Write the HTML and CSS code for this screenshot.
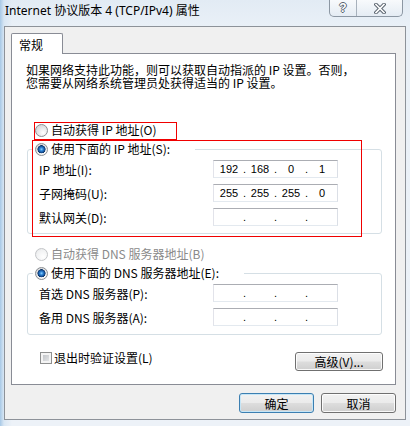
FILE: index.html
```html
<!DOCTYPE html>
<html lang="zh-CN">
<head>
<meta charset="utf-8">
<title>Internet 协议版本 4 (TCP/IPv4) 属性</title>
<link rel="stylesheet" href="styles.css">
</head>
<body>
<div class="window">
  <div class="titlebar">
    <div class="title">Internet 协议版本 4 (TCP/IPv4) 属性</div>
    <div class="caption-btns">
      <div class="cbtn help">?</div>
      <div class="cbtn close">
        <svg width="12" height="11" viewBox="0 0 12 11">
          <path d="M2 1.5 L10 9.5 M10 1.5 L2 9.5" stroke="#59636e" stroke-width="3.6" stroke-linecap="square"/>
          <path d="M2 1.5 L10 9.5 M10 1.5 L2 9.5" stroke="#ffffff" stroke-width="1.6" stroke-linecap="square"/>
        </svg>
      </div>
    </div>
  </div>
  <div class="client">
    <div class="tabs"><div class="tab">常规</div></div>
    <div class="panel">
      <p class="intro">如果网络支持此功能，则可以获取自动指派的 IP 设置。否则，<br>您需要从网络系统管理员处获得适当的 IP 设置。</p>
      <div class="radio-row first"><span class="radio"></span><span>自动获得 IP 地址(O)</span></div>
      <fieldset class="group g1">
        <legend><span class="radio checked"></span><span>使用下面的 IP 地址(S):</span></legend>
        <div class="field"><span>IP 地址(I):</span>
          <div class="ip"><span class="oct">192</span><span class="dot">.</span><span class="oct">168</span><span class="dot">.</span><span class="oct">0</span><span class="dot">.</span><span class="oct">1</span></div>
        </div>
        <div class="field"><span>子网掩码(U):</span>
          <div class="ip"><span class="oct">255</span><span class="dot">.</span><span class="oct">255</span><span class="dot">.</span><span class="oct">255</span><span class="dot">.</span><span class="oct">0</span></div>
        </div>
        <div class="field"><span>默认网关(D):</span>
          <div class="ip"><span class="oct"></span><span class="dot">.</span><span class="oct"></span><span class="dot">.</span><span class="oct"></span><span class="dot">.</span><span class="oct"></span></div>
        </div>
      </fieldset>
      <div class="radio-row dns disabled"><span class="radio"></span><span>自动获得 DNS 服务器地址(B)</span></div>
      <fieldset class="group g2">
        <legend><span class="radio checked"></span><span>使用下面的 DNS 服务器地址(E):</span></legend>
        <div class="field"><span>首选 DNS 服务器(P):</span>
          <div class="ip"><span class="oct"></span><span class="dot">.</span><span class="oct"></span><span class="dot">.</span><span class="oct"></span><span class="dot">.</span><span class="oct"></span></div>
        </div>
        <div class="field"><span>备用 DNS 服务器(A):</span>
          <div class="ip"><span class="oct"></span><span class="dot">.</span><span class="oct"></span><span class="dot">.</span><span class="oct"></span><span class="dot">.</span><span class="oct"></span></div>
        </div>
      </fieldset>
      <div class="footer-row">
        <label class="check"><span class="box"></span><span>退出时验证设置(L)</span></label>
        <button class="btn adv">高级(V)...</button>
      </div>
    </div>
    <div class="actions">
      <button class="btn default">确定</button>
      <button class="btn">取消</button>
    </div>
  </div>
  <div class="annot a1"></div>
  <div class="annot a2"></div>
</div>
</body>
</html>
```

FILE: styles.css
```css
* { box-sizing: border-box; }
html, body { margin: 0; padding: 0; }
body {
  width: 410px;
  height: 426px;
  overflow: hidden;
  font-family: "Noto Sans CJK SC", sans-serif;
  font-size: 12px;
  color: #000;
}
.window {
  position: relative;
  width: 410px;
  height: 426px;
  display: flex;
  flex-direction: column;
  background:
    linear-gradient(90deg, rgba(160,196,228,0.9) 0px, rgba(205,224,241,0.6) 4px, rgba(255,255,255,0) 12px),
    linear-gradient(180deg, #e2ebf4 0%, #e9f0f7 6%, #edf2f8 100%);
}
.titlebar {
  height: 26px;
  flex: none;
  display: flex;
  justify-content: space-between;
  align-items: flex-start;
  padding-left: 5px;
  padding-right: 7px;
}
.title {
  font-family: "Noto Sans", "Noto Sans CJK SC", sans-serif;
  font-size: 12px;
  line-height: 16px;
  padding-top: 3px;
  color: #000;
}
.caption-btns {
  display: flex;
  height: 17px;
  border: 1px solid #8c97a3;
  border-top: none;
  border-radius: 0 0 5px 5px;
  overflow: hidden;
  background: linear-gradient(180deg, rgba(255,255,255,0.75), rgba(228,235,243,0.75));
}
.cbtn {
  height: 16px;
  display: flex;
  align-items: center;
  justify-content: center;
}
.help {
  width: 27px;
  border-right: 1px solid #a7b1bc;
  font-family: "Liberation Sans", sans-serif;
  font-weight: bold;
  font-size: 12px;
  color: #ffffff;
  text-shadow: 1px 0 #5a646f, -1px 0 #5a646f, 0 1px #5a646f, 0 -1px #5a646f;
}
.close { width: 45px; }
.close svg { display: block; }

.client {
  flex: 1;
  margin: 0 4px 6px 4px;
  border: 1px solid #8d9299;
  background: #f0f0f0;
  padding: 6px 9px 0 6px;
  display: flex;
  flex-direction: column;
}
.tabs { display: flex; }
.tab {
  position: relative;
  z-index: 1;
  width: 52px;
  height: 21px;
  margin-bottom: -1px;
  padding: 2px 0 0 7px;
  line-height: 18px;
  background: #fff;
  border: 1px solid #898c95;
  border-bottom: none;
  border-radius: 2px 2px 0 0;
}
.panel {
  width: 385px;
  height: 332px;
  flex: none;
  background: #fff;
  border: 1px solid #898c95;
  display: flex;
  flex-direction: column;
  align-items: flex-start;
}
.intro {
  margin: 9px 0 0 14px;
  line-height: 13px;
  white-space: nowrap;
}
.radio-row {
  display: flex;
  align-items: center;
  gap: 3px;
  height: 16px;
  padding-left: 23px;
  line-height: 16px;
}
.radio-row.first { margin-top: 33px; }
.radio-row.dns { margin-top: 12px; }
.radio-row.disabled { color: #8a8a8a; }

.radio {
  display: inline-block;
  flex: none;
  width: 13px;
  height: 13px;
  border-radius: 50%;
  border: 1px solid #8b8e92;
  background: radial-gradient(circle at 65% 70%, #ffffff 0%, #e6e7e9 45%, #c9cbce 100%);
}
.radio.checked {
  background:
    radial-gradient(circle at 50% 48%, #8fd2ff 0px, #2f86d8 1.6px, #124484 3.4px, #0d3466 3.8px, rgba(13,52,102,0) 4.3px),
    radial-gradient(circle at 65% 70%, #ffffff 0%, #e6e7e9 55%, #c9cbce 100%);
}
.disabled .radio {
  border-color: #c3c5c8;
  background: radial-gradient(circle at 65% 70%, #ffffff 0%, #f1f2f3 60%, #e2e3e5 100%);
}

.group {
  margin: 3px 0 0 15px;
  width: 355px;
  min-width: 0;
  border: 1px solid #d5dfe5;
  border-radius: 3px;
  padding: 0 0 4px 5px;
}
.group.g2 { padding-bottom: 5px; }
.group legend {
  display: flex;
  align-items: center;
  gap: 3px;
  height: 16px;
  line-height: 16px;
  padding: 0 25px 0 2px;
}
.field {
  display: grid;
  grid-template-columns: 174px 125px;
  align-items: center;
  height: 24px;
  padding-left: 6px;
  white-space: nowrap;
}
.ip {
  display: flex;
  align-items: center;
  width: 125px;
  height: 18px;
  padding-left: 1px;
  background: #fff;
  border: 1px solid;
  border-color: #abadb3 #dbdfe6 #e3e9ef #e2e3ea;
  font-family: "Liberation Sans", sans-serif;
  font-size: 11px;
  line-height: 14px;
}
.oct { width: 28px; text-align: center; }
.dot { width: 3px; text-align: center; }

.footer-row {
  align-self: stretch;
  display: flex;
  justify-content: space-between;
  align-items: flex-start;
  margin-top: 16px;
  padding: 0 12px 0 28px;
}
.check {
  display: flex;
  align-items: center;
  gap: 2px;
  height: 14px;
  line-height: 14px;
}
.box {
  display: inline-block;
  width: 12px;
  height: 12px;
  border: 1px solid #8e8f8f;
  background: linear-gradient(135deg, #b9bcc0, #eceeef);
  box-shadow: inset 0 0 0 2px #f4f4f4;
}
.btn {
  font-family: "Noto Sans CJK SC", sans-serif;
  font-size: 12px;
  color: #000;
  padding: 0;
  margin: 0;
  height: 20px;
  line-height: 17px;
  border: 1px solid #707070;
  border-radius: 3px;
  background: linear-gradient(180deg, #f2f2f2 0%, #ebebeb 48%, #dddddd 52%, #cfcfcf 100%);
  box-shadow: inset 0 0 0 1px rgba(255,255,255,0.85);
}
.btn.adv {
  width: 88px;
  height: 19px;
  margin-top: 1px;
}
.actions {
  display: flex;
  justify-content: flex-end;
  gap: 7px;
  margin-top: 8px;
}
.actions .btn { width: 75px; }
.btn.default {
  border-color: #3c7fb1;
  box-shadow: inset 0 0 0 1px #c6e6f7;
}

.annot {
  position: absolute;
  border: 1px solid #f00000;
  z-index: 5;
  pointer-events: none;
}
.a1 { left: 34px; top: 122px; width: 143px; height: 18px; }
.a2 { left: 32px; top: 140px; width: 330px; height: 97px; }
```
